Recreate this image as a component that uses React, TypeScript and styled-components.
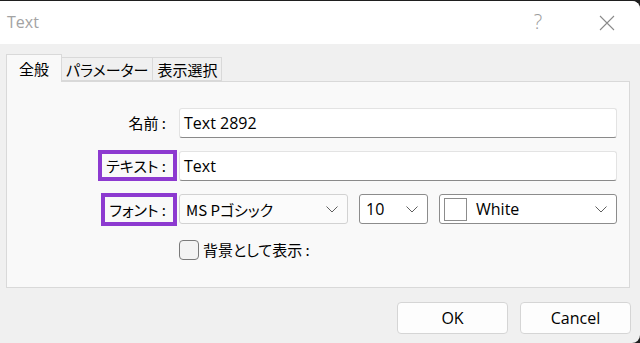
import React from "react";
import styled, { createGlobalStyle } from "styled-components";

const GlobalStyle = createGlobalStyle`
    html, body {
        margin: 0;
        padding: 0;
        background: #1f1f1f;
    }
    * {
        box-sizing: border-box;
    }
`

const latin = `"Open Sans", "Noto Sans", "Noto Sans CJK JP", sans-serif`
const jp = `"Noto Sans CJK JP", "Noto Sans", sans-serif`

const Window = styled.div`
    width: 640px;
    height: 342px;
    margin-top: 1px;
    background: #f0f0f0;
    border-radius: 0 8px 8px 0;
    overflow: hidden;
    display: flex;
    flex-direction: column;
`

const TitleBar = styled.div`
    height: 43px;
    background: #ffffff;
    display: flex;
    align-items: center;
    padding-left: 7px;
    flex-shrink: 0;
`

const Title = styled.div`
    flex: 1;
    font-family: ${latin};
    font-size: 16px;
    color: #a3a3a3;
    margin-top: -2px;
`

const Help = styled.div`
    width: 30px;
    text-align: center;
    font-family: ${latin};
    font-size: 20px;
    font-weight: 300;
    color: #9c9c9c;
    margin-right: 46px;
    margin-top: -2px;
`

const Close = styled.div`
    width: 16px;
    height: 16px;
    margin-right: 25px;
    display: flex;
`

const Body = styled.div`
    flex: 1;
    padding: 10px 10px 0 6px;
    display: flex;
    flex-direction: column;
`

const Tabs = styled.div`
    display: flex;
    align-items: flex-end;
    height: 27px;
    position: relative;
    z-index: 1;
`

const Tab = styled.div<{ $active?: boolean }>`
    height: ${p => (p.$active ? 28 : 24)}px;
    margin-bottom: ${p => (p.$active ? -1 : 0)}px;
    padding: ${p => (p.$active ? "0 8px" : "0 4px")};
    background: ${p => (p.$active ? "#f9f9f9" : "#f0f0f0")};
    border: 1px solid #d9d9d9;
    border-bottom: ${p => (p.$active ? "none" : "1px solid #d9d9d9")};
    border-left: ${p => (p.$active ? "1px solid #d9d9d9" : "none")};
    font-family: ${jp};
    font-feature-settings: "palt";
    font-size: 15px;
    color: #000;
    display: flex;
    align-items: center;
    justify-content: center;
    width: ${p => (p.$active ? 56 : "auto")}px;
`

const Panel = styled.div`
    height: 207px;
    width: 624px;
    background: #f9f9f9;
    border: 1px solid #d9d9d9;
    padding: 26px 12px 0 0;
    display: grid;
    grid-template-columns: 172px 1fr;
    grid-auto-rows: 30px;
    row-gap: 13px;
    align-items: center;
`

const LabelCell = styled.div`
    display: flex;
    justify-content: flex-end;
    align-items: center;
    height: 30px;
    padding-right: 2px;
`

const Label = styled.div<{ $mark?: boolean; $tall?: boolean }>`
    flex-shrink: 0;
    height: ${p => (p.$tall ? 33 : 31)}px;
    margin-top: ${p => (p.$tall ? 0 : -2)}px;
    border: 4px solid ${p => (p.$mark ? "#8d3ad0" : "transparent")};
    padding: 0 7px 0 4px;
    display: flex;
    align-items: center;
    font-family: ${jp};
    font-feature-settings: "palt";
    font-size: 15px;
    color: #000;
    white-space: nowrap;
`

const Input = styled.div`
    height: 30px;
    background: #ffffff;
    border: 1px solid #e3e3e3;
    border-bottom: 1px solid #8a8a8a;
    border-radius: 3px;
    padding: 0 4px;
    display: flex;
    align-items: center;
    font-family: ${latin};
    font-size: 16px;
    color: #000;
`

const ComboRow = styled.div`
    display: flex;
    gap: 11px;
`

const Combo = styled.div<{ $w?: number; $soft?: boolean }>`
    height: 30px;
    ${p => (p.$w ? `width: ${p.$w}px;` : "flex: 1;")}
    background: ${p => (p.$soft ? "#fbfbfb" : "#ffffff")};
    border: 1px solid ${p => (p.$soft ? "#d2d2d2" : "#8c8c8c")};
    border-radius: 3px;
    padding: 0 9px 0 4px;
    display: flex;
    align-items: center;
    gap: 7px;
    font-family: ${latin};
    font-size: 16px;
    color: #000;
`

const ComboText = styled.span<{ $jp?: boolean }>`
    flex: 1;
    font-family: ${p => (p.$jp ? jp : latin)};
    font-feature-settings: "palt";
    font-size: ${p => (p.$jp ? 15 : 16)}px;
    padding-left: 2px;
`

const Swatch = styled.div`
    width: 23px;
    height: 23px;
    border: 1px solid #8c8c8c;
    background: #ffffff;
`

const CheckRow = styled.div`
    grid-column: 2;
    align-self: start;
    display: flex;
    align-items: center;
    gap: 4px;
    height: 25px;
    font-family: ${jp};
    font-feature-settings: "palt";
    font-size: 15px;
    color: #000;
`

const CheckBox = styled.div`
    width: 20px;
    height: 20px;
    border: 1px solid #7a7a7a;
    border-radius: 4px;
    background: #f3f3f3;
`

const Footer = styled.div`
    display: flex;
    justify-content: flex-end;
    gap: 12px;
    margin-top: 14px;
    margin-right: -1px;
`

const Button = styled.button`
    width: 111px;
    height: 32px;
    background: #fdfdfd;
    border: 1px solid #d5d5d5;
    border-radius: 4px;
    font-family: ${latin};
    font-size: 16px;
    color: #000;
    padding: 0;
`

const Chevron = () => (
    <svg width="12" height="7" viewBox="0 0 12 7">
        <polyline points="0.5,0.5 6,6 11.5,0.5" fill="none" stroke="#5f5f5f" strokeWidth="1" />
    </svg>
)

export default function App() {
    return (
        <Window>
            <GlobalStyle />
            <TitleBar>
                <Title>Text</Title>
                <Help>?</Help>
                <Close>
                    <svg width="16" height="16" viewBox="0 0 16 16">
                        <path d="M1 1 L15 15 M15 1 L1 15" stroke="#8a8a8a" strokeWidth="1.1" />
                    </svg>
                </Close>
            </TitleBar>
            <Body>
                <Tabs>
                    <Tab $active>全般</Tab>
                    <Tab>パラメーター</Tab>
                    <Tab>表示選択</Tab>
                </Tabs>
                <Panel>
                    <LabelCell><Label>名前 :</Label></LabelCell>
                    <Input>Text 2892</Input>

                    <LabelCell><Label $mark>テキスト :</Label></LabelCell>
                    <Input>Text</Input>

                    <LabelCell><Label $mark $tall>フォント :</Label></LabelCell>
                    <ComboRow>
                        <Combo $w={169} $soft>
                            <ComboText $jp>MS Pゴシック</ComboText>
                            <Chevron />
                        </Combo>
                        <Combo $w={69}>
                            <ComboText>10</ComboText>
                            <Chevron />
                        </Combo>
                        <Combo>
                            <Swatch />
                            <ComboText>White</ComboText>
                            <Chevron />
                        </Combo>
                    </ComboRow>

                    <CheckRow>
                        <CheckBox />
                        背景として表示 :
                    </CheckRow>
                </Panel>
                <Footer>
                    <Button>OK</Button>
                    <Button>Cancel</Button>
                </Footer>
            </Body>
        </Window>
    )
}
